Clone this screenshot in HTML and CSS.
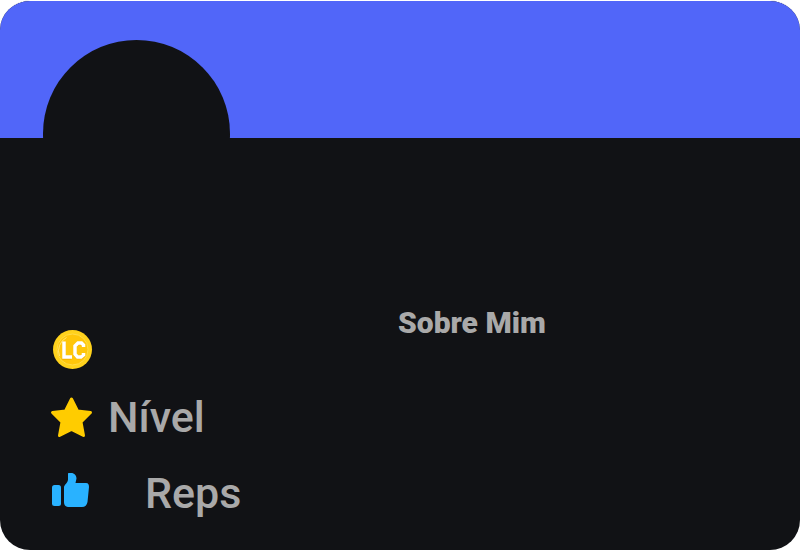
FILE: index.html
```html
<!DOCTYPE html>
<html lang="pt-BR">
<head>
<meta charset="utf-8">
<title>Perfil</title>
<link rel="stylesheet" href="styles.css">
</head>
<body>
<main class="card">
  <header class="banner"><div class="avatar"></div></header>
  <div class="content">
    <ul class="stats">
      <li class="stat stat-coins">
        <svg class="icon" viewBox="0 0 88 88" aria-hidden="true">
          <circle cx="45" cy="45" r="39" fill="#ffd21c"/>
          <circle cx="45" cy="45" r="31" fill="#ffc60a" stroke="#ffdc48" stroke-width="2"/>
          <path d="M19 58a30 30 0 0 1 14-37" fill="none" stroke="#ffe873" stroke-width="2"/>
          <g fill="none" stroke="#f0ae00" stroke-width="7">
            <path d="M28 31v31H43"/>
            <path d="M66 40v-4l-3-3h-7l-6 6v16l5 6h7l4-3v-4"/>
          </g>
          <g fill="none" stroke="#fff" stroke-width="7">
            <path d="M28 29v31H44"/>
            <path d="M67 40v-4l-4-4h-7l-6 6v16l5 6h7l5-4v-4"/>
          </g>
        </svg>
      </li>
      <li class="stat">
        <svg class="icon" viewBox="0 0 88 88" aria-hidden="true">
          <path d="M43 8 55 32l26 3-19 19 5 27-24-12-24 12 5-27L5 35l26-3z" fill="#fc0" stroke="#fc0" stroke-width="6" stroke-linejoin="round"/>
        </svg>
        <span>Nível</span>
      </li>
      <li class="stat stat-reps">
        <svg class="icon" viewBox="0 0 88 88" aria-hidden="true">
          <rect x="4" y="28" width="18" height="42" rx="5" fill="#29b2ff"/>
          <path d="M37 4h5c7 0 11 5 11 11l-2 9h21c5 0 6 4 6 8l-3 30c-1 6-5 10-11 10H39c-8 0-11-4-11-10V32c0-4 8-9 8-15V5z" fill="#29b2ff"/>
        </svg>
        <span>Reps</span>
      </li>
    </ul>
    <section class="about"><h2>Sobre Mim</h2></section>
  </div>
</main>
</body>
</html>
```
FILE: styles.css
```css
* { box-sizing: border-box; }
body {
  margin: 0;
  background: #fff;
  color: #a9a9a9;
  font-family: Roboto, sans-serif;
}
.card {
  display: flex;
  flex-direction: column;
  min-height: 100vh;
  border-radius: 30px;
  overflow: hidden;
  background: #111215;
  border-top: 1px solid #fff;
}
.banner {
  height: 137px;
  padding: 39px 43px 0;
  background: #5166f9;
  overflow: hidden;
}
.avatar {
  width: 187px;
  height: 187px;
  border-radius: 50%;
  background: #111215;
}
.content {
  display: grid;
  grid-template-columns: 1fr 1fr;
  padding: 0 54px 0 50px;
}
.stats {
  list-style: none;
  margin: 181px 0 0;
  padding: 0;
}
.stat {
  display: flex;
  align-items: center;
  gap: 14px;
  height: 76px;
  font-size: 43px;
  font-weight: 500;
  line-height: 52px;
}
.stat-coins { height: 60px; }
.stat-reps { gap: 51px; }
.icon {
  flex: none;
  width: 44px;
  height: 44px;
}
.about { padding-top: 167px; }
h2 {
  margin: 0;
  font-size: 30px;
  font-weight: 900;
  line-height: 36px;
}
```
